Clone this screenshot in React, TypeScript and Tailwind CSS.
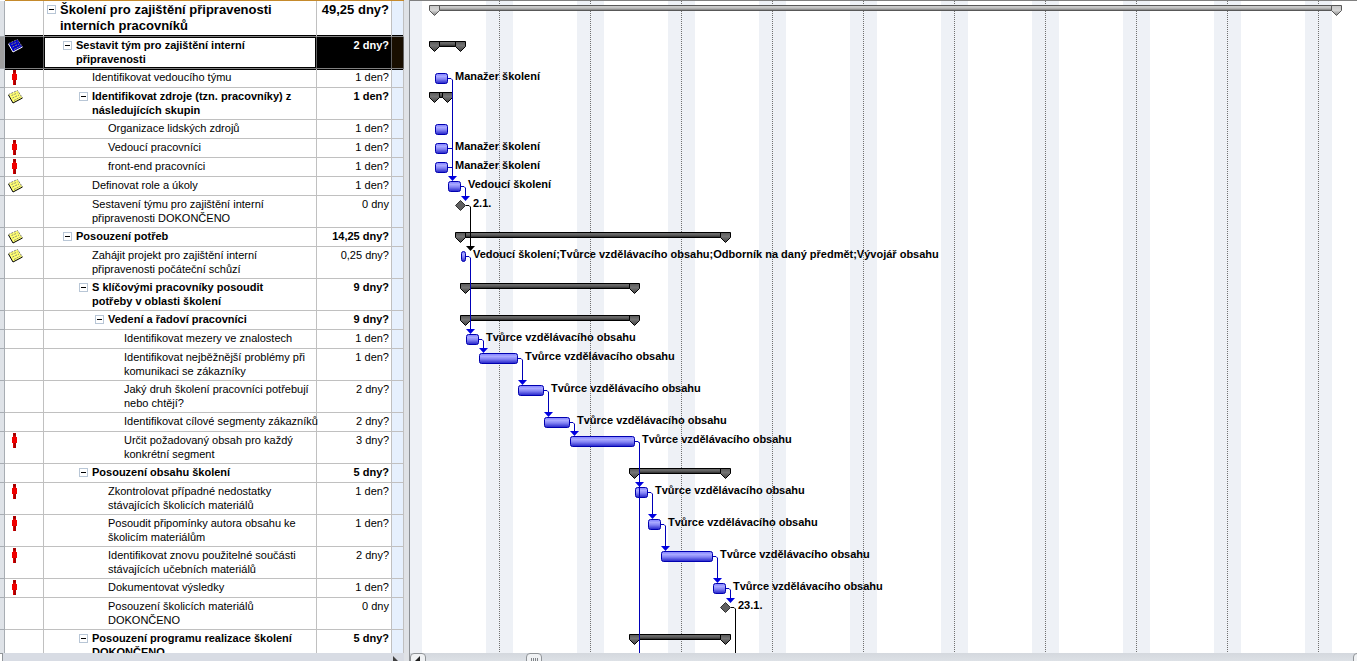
import { Fragment } from 'react';
import { clsx } from 'clsx';

type Indicator = 'person' | 'note' | 'noteDark';

interface Task {
  lines: string[];
  duration: string;
  level: number;
  height: number;
  summary?: boolean;
  selected?: boolean;
  indicator?: Indicator;
  span?: [number, number];
  milestone?: number;
  label?: string;
}

const CREATOR = 'Tvůrce vzdělávacího obsahu';

const TASKS: Task[] = [
  { lines: ['Školení pro zajištění připravenosti', 'interních pracovníků'], duration: '49,25 dny?', level: 0, height: 36, summary: true, span: [19, 932] },
  { lines: ['Sestavit tým pro zajištění interní', 'připravenosti'], duration: '2 dny?', level: 1, height: 32, summary: true, selected: true, indicator: 'noteDark', span: [19, 56] },
  { lines: ['Identifikovat vedoucího týmu'], duration: '1 den?', level: 2, height: 19, indicator: 'person', span: [25, 38], label: 'Manažer školení' },
  { lines: ['Identifikovat zdroje (tzn. pracovníky) z', 'následujících skupin'], duration: '1 den?', level: 2, height: 32, summary: true, indicator: 'note', span: [19, 43] },
  { lines: ['Organizace lidských zdrojů'], duration: '1 den?', level: 3, height: 19, span: [25, 38] },
  { lines: ['Vedoucí pracovníci'], duration: '1 den?', level: 3, height: 19, indicator: 'person', span: [25, 38], label: 'Manažer školení' },
  { lines: ['front-end pracovníci'], duration: '1 den?', level: 3, height: 19, indicator: 'person', span: [25, 38], label: 'Manažer školení' },
  { lines: ['Definovat role a úkoly'], duration: '1 den?', level: 2, height: 19, indicator: 'note', span: [38, 51], label: 'Vedoucí školení' },
  { lines: ['Sestavení týmu pro zajištění interní', 'připravenosti DOKONČENO'], duration: '0 dny', level: 2, height: 32, milestone: 50, label: '2.1.' },
  { lines: ['Posouzení potřeb'], duration: '14,25 dny?', level: 1, height: 19, summary: true, indicator: 'note', span: [45, 321] },
  { lines: ['Zahájit projekt pro zajištění interní', 'připravenosti počáteční schůzí'], duration: '0,25 dny?', level: 2, height: 32, indicator: 'note', span: [51, 56], label: 'Vedoucí školení;Tvůrce vzdělávacího obsahu;Odborník na daný předmět;Vývojář obsahu' },
  { lines: ['S klíčovými pracovníky posoudit', 'potřeby v oblasti školení'], duration: '9 dny?', level: 2, height: 32, summary: true, span: [50, 230] },
  { lines: ['Vedení a řadoví pracovníci'], duration: '9 dny?', level: 3, height: 19, summary: true, span: [50, 230] },
  { lines: ['Identifikovat mezery ve znalostech'], duration: '1 den?', level: 4, height: 19, span: [56, 69], label: CREATOR },
  { lines: ['Identifikovat nejběžnější problémy při', 'komunikaci se zákazníky'], duration: '1 den?', level: 4, height: 32, span: [69, 108], label: CREATOR },
  { lines: ['Jaký druh školení pracovníci potřebují', 'nebo chtějí?'], duration: '2 dny?', level: 4, height: 32, span: [108, 134], label: CREATOR },
  { lines: ['Identifikovat cílové segmenty zákazníků'], duration: '2 dny?', level: 4, height: 19, span: [134, 160], label: CREATOR },
  { lines: ['Určit požadovaný obsah pro každý', 'konkrétní segment'], duration: '3 dny?', level: 4, height: 32, indicator: 'person', span: [160, 225], label: CREATOR },
  { lines: ['Posouzení obsahu školení'], duration: '5 dny?', level: 2, height: 19, summary: true, span: [219, 321] },
  { lines: ['Zkontrolovat případné nedostatky', 'stávajících školicích materiálů'], duration: '1 den?', level: 3, height: 32, indicator: 'person', span: [225, 238], label: CREATOR },
  { lines: ['Posoudit připomínky autora obsahu ke', 'školicím materiálům'], duration: '1 den?', level: 3, height: 32, indicator: 'person', span: [238, 251], label: CREATOR },
  { lines: ['Identifikovat znovu použitelné součásti', 'stávajících učebních materiálů'], duration: '2 dny?', level: 3, height: 32, indicator: 'person', span: [251, 303], label: CREATOR },
  { lines: ['Dokumentovat výsledky'], duration: '1 den?', level: 3, height: 19, indicator: 'person', span: [303, 316], label: CREATOR },
  { lines: ['Posouzení školicích materiálů', 'DOKONČENO'], duration: '0 dny', level: 3, height: 32, milestone: 315, label: '23.1.' },
  { lines: ['Posouzení programu realizace školení', 'DOKONČENO'], duration: '5 dny?', level: 2, height: 32, summary: true, span: [219, 321] },
];

// Top edge of every row, shared by the grid and the chart
const TOPS = TASKS.map((_, i) => TASKS.slice(0, i).reduce((sum, t) => sum + t.height, 0));

// [from row, to row]; a missing target runs off the bottom of the chart
const LINKS: [number, number?][] = [
  [2, 7], [7, 8], [8, 10], [10, 13], [13, 14], [14, 15], [15, 16], [16, 17],
  [17], [17, 19], [19, 20], [20, 21], [21, 22], [22, 23], [23],
];

const INDENT = ['pl-[3px]', 'pl-[19px]', 'pl-[35px]', 'pl-[51px]', 'pl-[67px]'];

function PersonIcon() {
  return (
    <svg width="7" height="15" viewBox="0 0 7 15" shapeRendering="crispEdges" className="ml-[6px] block" role="img" aria-label="Zdroj">
      <path d="M2 0h3v3H2z" fill="#b00000" />
      <path d="M3 1h1v1H3z" fill="#800000" />
      <path d="M1 4h5v6H1z" fill="#f00000" />
      <path d="M2 3h3v1H2zM2 10h3v5H2z" fill="#e00000" />
      <path d="M3 10h2v5H3z" fill="#a80000" />
    </svg>
  );
}

function NoteIcon({ dark }: { dark?: boolean }) {
  return (
    <svg width="15" height="14" viewBox="0 0 15 14" className="ml-[3px] mt-px block" role="img" aria-label="Poznámka">
      <path d="M.5 4.500 9.500 .5l5 7.500-9.500 5z" fill={dark ? '#0000d0' : '#ffff70'} />
      <path d="M.5 4.500 9.500 .5l5 7.500" fill="none" stroke="#808080" strokeDasharray="2 1" />
      <path d="M.5 5 5 13l9.500-5" fill="none" stroke={dark ? '#fff' : '#000'} />
      <path d="M3.500 5.500 9.500 3M4.500 8l6.500-3M6 10.500 12.500 7" stroke={dark ? '#8c8c70' : '#909070'} strokeDasharray="2 1" />
    </svg>
  );
}

function TaskRow({ task, index }: { task: Task; index: number }) {
  const { selected, summary } = task;
  const cell = clsx(
    'border-b border-r p-0 align-top',
    selected || TASKS[index + 1]?.selected ? 'border-b-[#808080]' : 'border-b-[#c0c0c0]',
    selected ? 'border-r-[#606060]' : 'border-r-[#c0c0c0]',
    TASKS[index + 1]?.selected && 'shadow-[inset_0_-1px_0_#000]',
    TASKS[index - 1]?.selected && 'shadow-[inset_0_1px_0_#000]',
  );
  const text = clsx(
    'whitespace-nowrap pt-px',
    task.level === 0 ? 'text-[13px] leading-4' : 'text-[11px] leading-[14px]',
    summary && 'font-bold',
  );
  return (
    <tr style={{ height: task.height }}>
      <td className={clsx('border-b border-r border-[#a8adb3] p-0', selected ? 'bg-[#a0a0a0]' : 'bg-[#dfe3e8]')} />
      <td className={clsx(cell, 'pt-px', selected && 'bg-black')}>
        {task.indicator === 'person' && <PersonIcon />}
        {(task.indicator === 'note' || task.indicator === 'noteDark') && <NoteIcon dark={selected} />}
      </td>
      <td className={clsx(cell, selected && 'shadow-[inset_0_0_0_1px_#000]')}>
        <div className={clsx('flex gap-1', INDENT[task.level])}>
          {summary ? (
            <button
              type="button"
              aria-label="Sbalit"
              className="mt-[4px] flex size-[9px] shrink-0 items-center justify-center border border-[#b8c6d6] bg-white"
            >
              <span className="h-px w-[5px] bg-black" />
            </button>
          ) : (
            <span className="w-[9px] shrink-0" />
          )}
          <div className={text}>
            {task.lines.map((line) => (
              <div key={line}>{line}</div>
            ))}
          </div>
        </div>
      </td>
      <td className={clsx(cell, selected && 'bg-black text-white')}>
        <div className={clsx(text, 'pr-[2px] text-right')}>{task.duration}</div>
      </td>
      <td className={clsx(cell, selected ? 'bg-[#180e00]' : 'bg-[#e6f0fd]')} />
    </tr>
  );
}

function SummaryBar({ x1, x2, y, project }: { x1: number; x2: number; y: number; project?: boolean }) {
  const stroke = project ? '#585858' : '#000';
  const cap = project ? 'url(#projectCap)' : 'url(#summaryCap)';
  const marker = (x: number) => (
    <path d={`M${x + 0.5} ${y + 0.5}h10v5l-5 5l-5 -5z`} fill={cap} stroke={stroke} />
  );
  return (
    <g>
      <rect x={x1 + 5.5} y={y + 0.5} width={x2 - x1 - 11} height="5" fill={project ? 'url(#projectBar)' : 'url(#summaryBar)'} stroke={stroke} />
      {marker(x1)}
      {marker(x2 - 11)}
    </g>
  );
}

function Link({ from, to }: { from: number; to?: number }) {
  const source = TASKS[from];
  const black = source.milestone !== undefined;
  const end = black ? source.milestone! + 6 : source.span![1];
  const x = end + 4.5;
  const y = TOPS[from] + 9.5;
  const isMilestone = to !== undefined && TASKS[to].milestone !== undefined;
  const tip = to === undefined ? 700 : TOPS[to] + (isMilestone ? 5 : 4);
  return (
    <g>
      <path d={`M${end} ${y}h3l1.500 1.500V${tip - (to === undefined ? 0 : 4)}`} fill="none" stroke={black ? '#000' : '#0000b8'} />
      {to !== undefined && (
        <path d={`M${x - 4.5} ${tip - 5}h9l-4.500 5z`} fill={black ? '#000' : '#0000e0'} />
      )}
    </g>
  );
}

function GanttChart() {
  return (
    <svg className="block h-full w-full text-[11px] font-bold" role="img" aria-label="Ganttův diagram">
      <defs>
        <pattern id="weeks" x="-15" y="0" width="91" height="2" patternUnits="userSpaceOnUse">
          <rect width="91" height="2" fill="#fff" />
          <rect width="27" height="2" fill="#eef1f6" />
          <rect x="13" width="1" height="1" fill="#707070" />
        </pattern>
        <linearGradient id="taskBar" x1="0" y1="0" x2="0" y2="1">
          <stop offset="0" stopColor="#8080ff" />
          <stop offset=".3" stopColor="#a8a8ff" />
          <stop offset=".55" stopColor="#8484f4" />
          <stop offset="1" stopColor="#2020c8" />
        </linearGradient>
        <linearGradient id="summaryBar" x1="0" y1="0" x2="0" y2="1">
          <stop offset="0" stopColor="#707070" />
          <stop offset=".5" stopColor="#606060" />
          <stop offset="1" stopColor="#202020" />
        </linearGradient>
        <linearGradient id="summaryCap" x1="0" y1="0" x2="0" y2="1">
          <stop offset="0" stopColor="#585858" />
          <stop offset=".4" stopColor="#747474" />
          <stop offset="1" stopColor="#404040" />
        </linearGradient>
        <linearGradient id="projectBar" x1="0" y1="0" x2="0" y2="1">
          <stop offset="0" stopColor="#d0d0d0" />
          <stop offset=".5" stopColor="#c0c0c0" />
          <stop offset="1" stopColor="#707070" />
        </linearGradient>
        <linearGradient id="projectCap" x1="0" y1="0" x2="0" y2="1">
          <stop offset="0" stopColor="#c8c8c8" />
          <stop offset=".5" stopColor="#d4d4d4" />
          <stop offset="1" stopColor="#808080" />
        </linearGradient>
      </defs>
      <rect width="100%" height="100%" fill="url(#weeks)" />
      {TASKS.map((task, i) => {
        const y = TOPS[i] + 4;
        return (
          <Fragment key={i}>
            {task.summary && task.span && (
              <SummaryBar x1={task.span[0]} x2={task.span[1]} y={y} project={task.level === 0} />
            )}
            {!task.summary && task.span && (
              <rect
                x={task.span[0] + 0.5}
                y={y + 0.5}
                width={task.span[1] - task.span[0] - 1}
                height="10"
                rx="2"
                fill="url(#taskBar)"
                stroke="#0000b0"
              />
            )}
            {task.milestone !== undefined && (
              <path d={`M${task.milestone + 0.5} ${y + 0.5}l5 5l-5 5l-5 -5z`} fill="#606060" stroke="#303030" />
            )}
            {task.label && (
              <text x={task.span ? task.span[1] + 7 : task.milestone! + 13} y={TOPS[i] + 11}>
                {task.label}
              </text>
            )}
          </Fragment>
        );
      })}
      {[5, 6].map((i) => (
        <path key={i} d={`M38 ${TOPS[i] + 9.5}h4`} stroke="#0000b8" />
      ))}
      {LINKS.map(([from, to]) => (
        <Link key={`${from}-${to}`} from={from} to={to} />
      ))}
    </svg>
  );
}

export default function App() {
  return (
    <div className="flex h-screen overflow-hidden bg-white font-['Liberation_Sans',Arial,sans-serif] text-black">
      <section className="flex w-[404px] shrink-0 flex-col">
        <div className="ml-[5px] h-px shrink-0 bg-[#c58a2c]" />
        <div className="min-h-0 flex-1 overflow-hidden">
          <table className="w-full table-fixed border-separate border-spacing-0">
            <colgroup>
              <col className="w-[5px]" />
              <col className="w-[39px]" />
              <col className="w-[273px]" />
              <col className="w-[75px]" />
              <col className="w-[12px]" />
            </colgroup>
            <tbody>
              {TASKS.map((task, i) => (
                <TaskRow key={i} task={task} index={i} />
              ))}
            </tbody>
          </table>
        </div>
        <div className="flex h-2 shrink-0 items-start justify-between overflow-hidden bg-[#d8dce4]">
          <span className="h-4 w-[3px] border-r border-t border-[#909498] bg-white" />
          <button type="button" aria-label="Posunout doprava" className="mr-[6px] mt-[3px]">
            <svg width="6" height="10" viewBox="0 0 6 10" className="block">
              <path d="M1 0l5 5l-5 5z" fill="#404040" />
            </svg>
          </button>
        </div>
      </section>
      <div className="w-[6px] shrink-0 border-r border-[#8c9094] bg-[#dfe2e6]" />
      <section className="flex min-w-0 flex-1 flex-col border-t border-[#808080]">
        <div className="min-h-0 flex-1 overflow-hidden">
          <GanttChart />
        </div>
        <div className="flex h-2 shrink-0 items-start overflow-hidden bg-linear-to-b from-[#d4d8de] to-[#dde1e6]">
          <button type="button" aria-label="Posunout doleva" className="flex h-4 w-4 items-start justify-center rounded-sm border border-[#909498] bg-[#f0f2f4] pt-[2px]">
            <svg width="6" height="10" viewBox="0 0 6 10" className="block">
              <path d="M5 0L0 5l5 5z" fill="#202020" />
            </svg>
          </button>
          <button type="button" aria-label="Posuvník" className="ml-[100px] flex h-4 w-4 items-start justify-center gap-px rounded-sm border border-[#909498] bg-[#f0f2f4] pt-1">
            <span className="h-2 w-px bg-[#808488]" />
            <span className="h-2 w-px bg-[#808488]" />
            <span className="h-2 w-px bg-[#808488]" />
            <span className="h-2 w-px bg-[#808488]" />
          </button>
          <button type="button" aria-label="Posunout doprava" className="-mr-3 ml-auto h-4 w-4 rounded-sm border border-[#909498] bg-[#f0f2f4]" />
        </div>
      </section>
    </div>
  );
}
